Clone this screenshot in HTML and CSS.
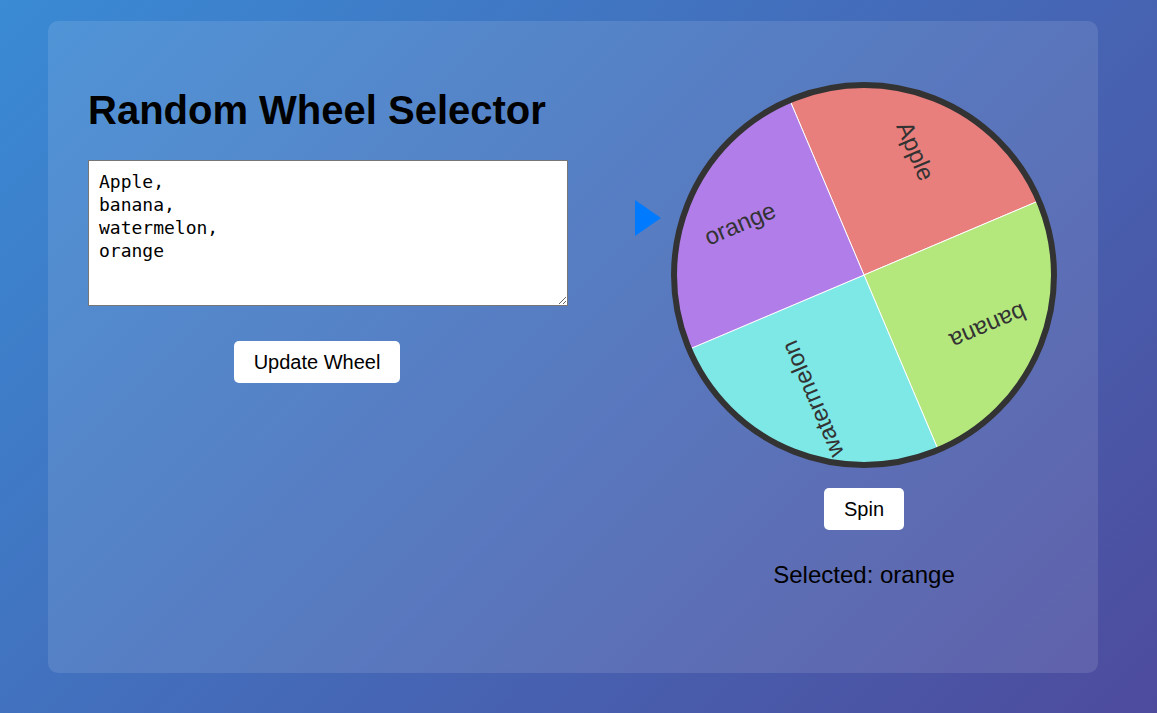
FILE: index.html
```html
<!DOCTYPE html>
<html lang="en">
<head>
<meta charset="utf-8">
<title>Random Wheel Selector</title>
<link rel="stylesheet" href="styles.css">
</head>
<body>
  <main class="card">
    <section class="left">
      <h1 class="title">Random Wheel Selector</h1>
      <textarea class="items">Apple,
banana,
watermelon,
orange</textarea>
      <button class="btn update-btn">Update Wheel</button>
    </section>
    <section class="right">
      <div class="wheel-wrap">
        <div class="pointer"></div>
        <svg class="wheel" width="390" height="390" viewBox="0 0 390 390">
          <path class="seg" fill="hsl(1,70%,70%)" d="M195 195 L120.8 20.1 A190 190 0 0 1 369.9 120.8 Z"/>
          <path class="seg" fill="hsl(89,70%,70%)" d="M195 195 L369.9 120.8 A190 190 0 0 1 269.2 369.9 Z"/>
          <path class="seg" fill="hsl(179,70%,70%)" d="M195 195 L269.2 369.9 A190 190 0 0 1 20.1 269.2 Z"/>
          <path class="seg" fill="hsl(269,70%,70%)" d="M195 195 L20.1 269.2 A190 190 0 0 1 120.8 20.1 Z"/>
          <text class="label" transform="translate(244.8 71.7) rotate(67)">Apple</text>
          <text class="label" transform="translate(318.3 244.8) rotate(157)">banana</text>
          <text class="label" transform="translate(145.2 318.3) rotate(247)">watermelon</text>
          <text class="label" transform="translate(71.7 145.2) rotate(337)">orange</text>
          <circle class="ring" cx="195" cy="195" r="190"/>
        </svg>
      </div>
      <button class="btn spin-btn">Spin</button>
      <p class="result">Selected: orange</p>
    </section>
  </main>
</body>
</html>
```

FILE: styles.css
```css
* {
  box-sizing: border-box;
}

html, body {
  margin: 0;
  height: 100%;
}

body {
  padding: 21px 48px 0 48px;
  background: linear-gradient(135deg, #3a8ad4 0%, #4e4b9d 100%);
  font-family: "Liberation Sans", Arial, sans-serif;
  overflow: hidden;
}

.card {
  width: 1050px;
  height: 652px;
  padding: 0 39px 0 40px;
  border-radius: 10px;
  background: rgba(255, 255, 255, 0.11);
  display: flex;
  justify-content: space-between;
  align-items: flex-start;
}

.left {
  width: 458px;
  padding-top: 66px;
  display: flex;
  flex-direction: column;
  align-items: flex-start;
}

.title {
  margin: 0;
  font-size: 40px;
  line-height: 46px;
  font-weight: bold;
  color: #000;
  white-space: nowrap;
}

.items {
  margin-top: 27px;
  width: 480px;
  height: 146px;
  flex-shrink: 0;
  padding: 9px 10px;
  border: 1px solid #767676;
  border-radius: 0;
  background: #fff;
  font-family: "DejaVu Sans Mono", monospace;
  font-size: 18px;
  line-height: 23px;
  color: #000;
  resize: both;
}

.btn {
  border: none;
  border-radius: 5px;
  background: #fff;
  color: #000;
  font-family: "Liberation Sans", Arial, sans-serif;
  font-size: 20px;
  line-height: 22px;
  padding: 10px 20px;
  cursor: pointer;
}

.update-btn {
  margin-top: 35px;
  align-self: center;
}

.right {
  width: 390px;
  padding-top: 59px;
  display: flex;
  flex-direction: column;
  align-items: center;
}

.wheel-wrap {
  position: relative;
  width: 390px;
  height: 390px;
}

.wheel {
  display: block;
}

.pointer {
  position: absolute;
  left: -34px;
  top: 120px;
  width: 0;
  height: 0;
  border-top: 18px solid transparent;
  border-bottom: 18px solid transparent;
  border-left: 26px solid #007bff;
}

.seg {
  stroke: #fff;
  stroke-width: 1;
}

.label {
  font-family: "Liberation Sans", Arial, sans-serif;
  font-size: 24px;
  fill: #333;
  text-anchor: middle;
  dominant-baseline: middle;
}

.ring {
  fill: none;
  stroke: #333;
  stroke-width: 6;
}

.spin-btn {
  margin-top: 18px;
}

.result {
  margin: 31px 0 0 0;
  font-size: 24px;
  color: #000;
  white-space: nowrap;
}
```
